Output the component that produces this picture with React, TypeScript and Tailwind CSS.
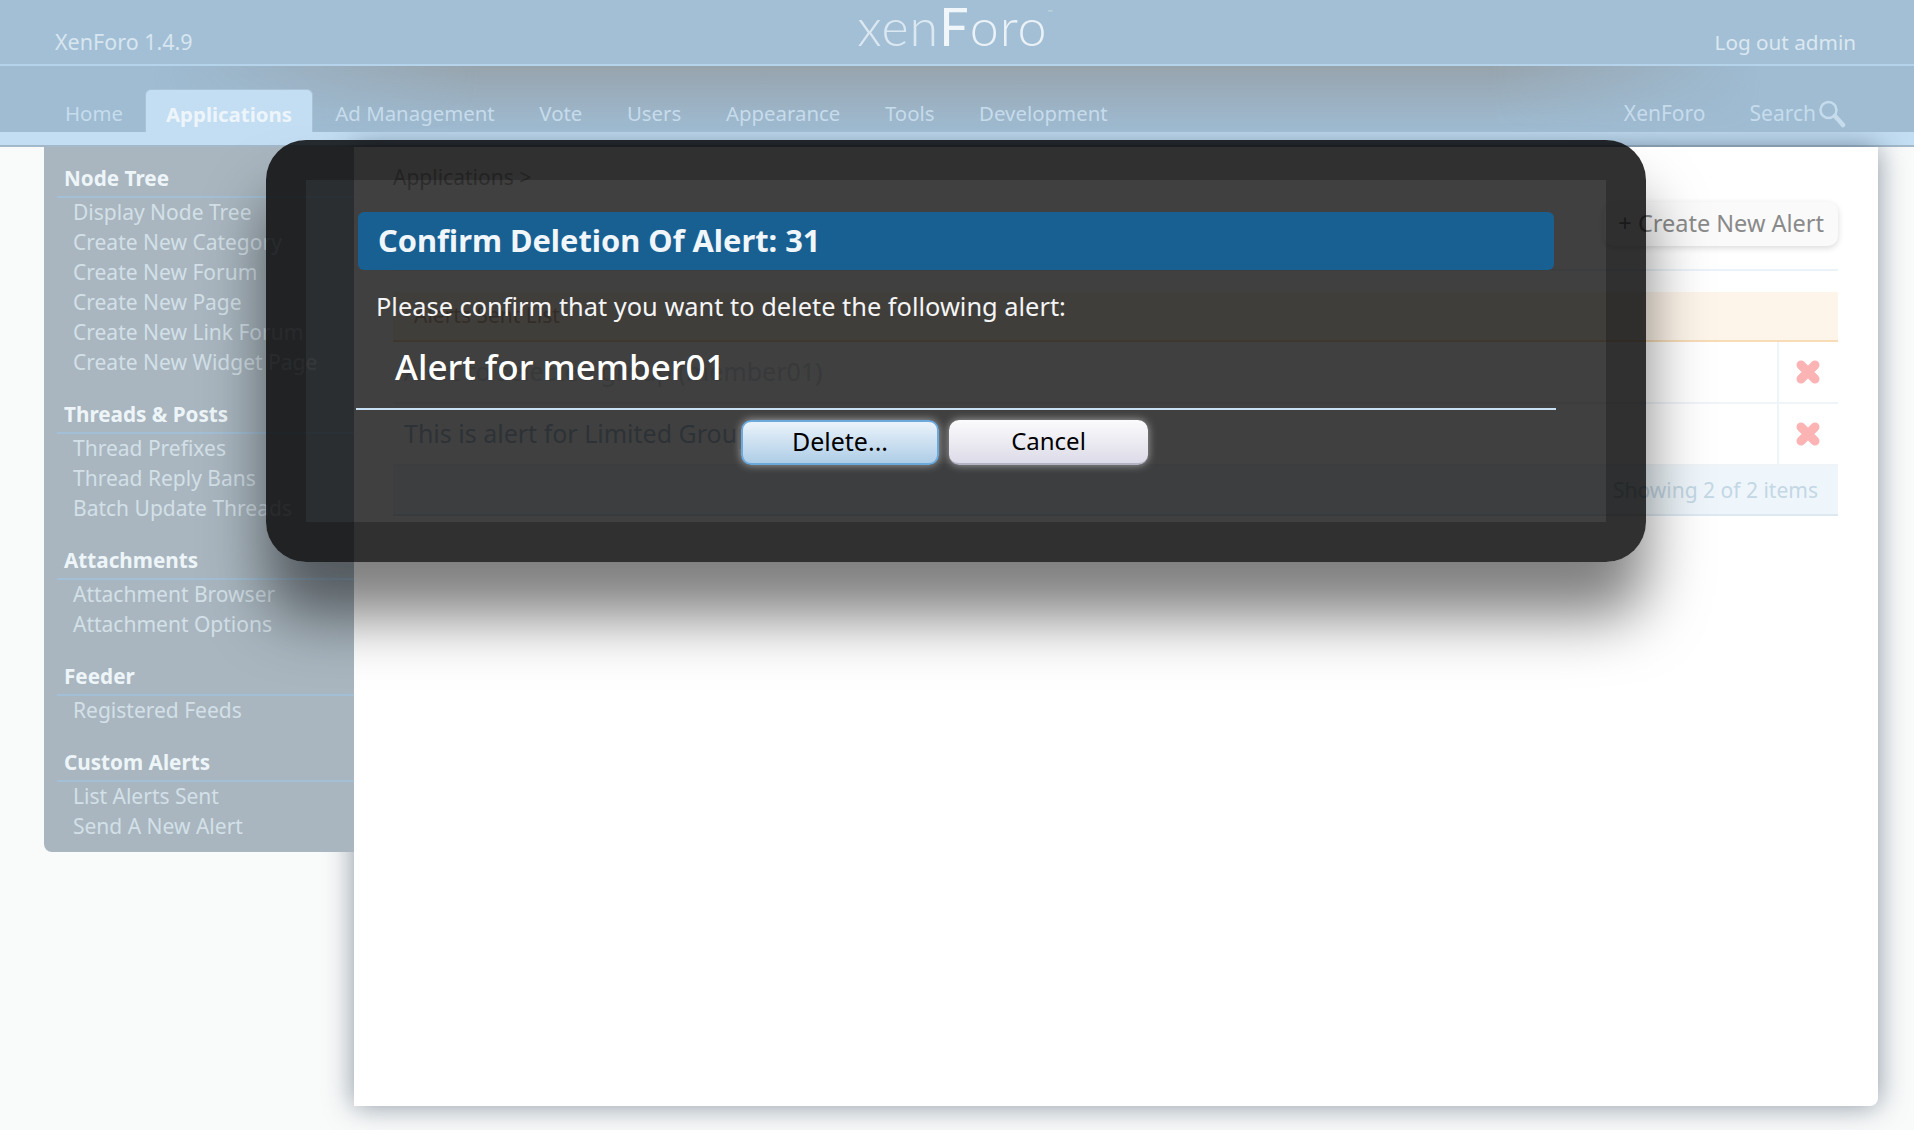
const font = { fontFamily: '"Noto Sans", "Liberation Sans", sans-serif' };

const navItems = ["Ad Management", "Vote", "Users", "Appearance", "Tools", "Development"];

const sections = [
  { title: "Node Tree", links: ["Display Node Tree", "Create New Category", "Create New Forum", "Create New Page", "Create New Link Forum", "Create New Widget Page"] },
  { title: "Threads & Posts", links: ["Thread Prefixes", "Thread Reply Bans", "Batch Update Threads"] },
  { title: "Attachments", links: ["Attachment Browser", "Attachment Options"] },
  { title: "Feeder", links: ["Registered Feeds"] },
  { title: "Custom Alerts", links: ["List Alerts Sent", "Send A New Alert"] },
];

function DeleteIcon() {
  return (
    <svg width="26" height="26" viewBox="0 0 26 26">
      <path d="M6 6 L20 20 M20 6 L6 20" stroke="#fcb3b3" strokeWidth="9" strokeLinecap="round" />
    </svg>
  );
}

function SearchIcon() {
  return (
    <svg width="28" height="28" viewBox="0 0 28 28" fill="none" stroke="#c6dcec" className="ml-[2px]">
      <circle cx="10.5" cy="10" r="8" strokeWidth="2.5" />
      <path d="M17 16 L25 25" strokeWidth="4.5" strokeLinecap="round" />
    </svg>
  );
}

function AlertRow({ text, faint }: { text: string; faint?: boolean }) {
  return (
    <div className="flex h-[62px] items-center border-b-2 border-[#eef4f8]">
      <div className={faint ? "flex-1 truncate pl-[11px] text-[25px] text-[#dde3e8]" : "flex-1 truncate pl-[11px] text-[25px] text-[#b2c6d6]"}>{text}</div>
      <div className="flex h-full w-[61px] items-center justify-center border-l-2 border-[#eef4f8] pr-[2px]">
        <DeleteIcon />
      </div>
    </div>
  );
}

export default function App() {
  return (
    <div className="relative h-[1130px] overflow-hidden bg-[#f9fafa]" style={font}>
      <header className="flex h-[66px] items-center border-b-2 border-[#b5d4ec] bg-[#a3bfd5] pl-[55px] pr-[58px]">
        <div className="flex-1 pt-[21px] text-[21.5px] text-[#d7e6f0]">XenForo 1.4.9</div>
        <div className="h-[52px] self-start text-[52px] font-light leading-[52px] tracking-[1px] text-[#dbe8f1]" style={{ fontFamily: "Lato, sans-serif" }}>
          xen<span className="font-normal text-[#f0f6fa]">F</span><span className="text-[#eaf2f7]">oro</span><span className="align-top text-[7px] leading-[24px]">™</span>
        </div>
        <div className="flex-1 pt-[21px] text-right text-[20.7px] text-[#dbe8f1]">Log out admin</div>
      </header>

      <nav className="relative flex h-[66px] items-end bg-[#9fbcd3] pl-[43px] pr-[68px] text-[20.4px] text-[#c6dcec]">
        <div className="absolute inset-0 bg-[linear-gradient(to_bottom,rgba(140,130,120,0.42),rgba(140,130,120,0))] [mask-image:linear-gradient(to_right,transparent_8%,black_25%,black_78%,transparent_92%)]" />
        <a className="relative flex h-[43px] w-[100px] items-center pl-[22px] pt-[6px]">Home</a>
        <a className="relative ml-[2px] flex h-[43px] w-[168px] items-center justify-center rounded-t-[6px] border-x border-t border-[#a9c2d6] bg-[#c3ddf2] pt-[6px] font-bold text-[#edf5fb]">Applications</a>
        <div className="relative flex">
          {navItems.map((item) => (
            <a key={item} className="flex h-[43px] items-center px-[22.3px] pt-[6px]">{item}</a>
          ))}
        </div>
        <div className="relative ml-auto flex items-center text-[21px]">
          <a className="flex h-[43px] items-center px-[22px] pt-[6px]">XenForo</a>
          <a className="flex h-[43px] items-center pl-[22px] pt-[6px]">Search<SearchIcon /></a>
        </div>
      </nav>
      <div className="h-[15px] border-b-2 border-[#a3b9ca] bg-[#c3ddf2]" />

      <div className="flex items-start pl-[44px] pr-[36px]">
        <aside className="relative z-10 h-[705px] w-[310px] rounded-bl-[8px] bg-[#a9b6bf] pl-[13px] pt-[14px]">
          {sections.map((s) => (
            <div key={s.title} className="mb-[19px]">
              <h3 className="flex h-[37px] items-center border-b-2 border-[#a3bfd6] pl-[7px] text-[20.7px] font-bold text-[#eef5f9]">{s.title}</h3>
              {s.links.map((l) => (
                <a key={l} className="flex h-[30px] items-center whitespace-nowrap pl-[16px] text-[21px] text-[#d3e0e8]">{l}</a>
              ))}
            </div>
          ))}
        </aside>

        <main className="h-[959px] flex-1 rounded-br-[8px] bg-white pl-[39px] pr-[40px] shadow-[0_0_28px_rgba(60,80,100,0.6)]">
          <div className="flex h-[55px] items-center pt-[7px] text-[21px] text-[#b4b4b4]">Applications &gt;</div>
          <div className="flex h-[69px] justify-end border-b-2 border-[#eaf4f8]">
            <button className="h-[44px] rounded-[10px] bg-[#fafafa] px-[14px] text-[23.5px] text-[#8a8a8a] shadow-[0_2px_6px_rgba(0,0,0,0.15)]">+ Create New Alert</button>
          </div>
          <div className="mt-[21px] flex h-[50px] items-center border-b-2 border-[#f8dcb8] bg-[#fef5ea] pl-[21px] text-[21px] text-[#c9b29a]">Alerts Sent List</div>
          <AlertRow text="Alert to selected group (member01)" faint />
          <AlertRow text="This is alert for Limited Group" />
          <div className="flex h-[50px] items-center justify-end border-b-2 border-[#dce9f1] bg-[#eef6fb] pr-[20px] pt-[2px] text-[21px] text-[#c3d7e4]">Showing 2 of 2 items</div>
        </main>
      </div>

      <div className="absolute left-[266px] top-[140px] z-20 h-[422px] w-[1380px] rounded-[40px] border-[40px] border-black/25 bg-black/75 shadow-[0_55px_60px_rgba(0,0,0,0.5)]">
        <h2 className="ml-[52px] mt-[32px] flex h-[58px] w-[1196px] items-center rounded-[6px] bg-[#196092] pb-[2px] pl-[20px] text-[30.8px] font-bold text-[#f0f6fa]">Confirm Deletion Of Alert: 31</h2>
        <p className="ml-[70px] mt-[19px] text-[25.4px] leading-[34px] text-[#f5f5f5]">Please confirm that you want to delete the following alert:</p>
        <p className="ml-[89px] mt-[19px] text-[35px] font-medium leading-[50px] text-white">Alert for member01</p>
        <div className="ml-[50px] mt-[16px] h-[2px] w-[1200px] bg-[#c8e0f4]" />
        <div className="ml-[435px] mt-[10px] flex gap-[10px]">
          <button className="h-[45px] w-[198px] rounded-[10px] border-2 border-[#6ba9dc] bg-[linear-gradient(to_bottom,#eaf3fb,#aecde6)] pb-[2px] text-[25px] text-black shadow-[0_0_8px_rgba(255,255,255,0.55)]">Delete...</button>
          <button className="h-[45px] w-[199px] rounded-[10px] border-b-2 border-[#b4b3c6] bg-[linear-gradient(to_bottom,#fbfbfc,#dcdbe8)] pb-[2px] text-[24px] text-black shadow-[0_0_8px_rgba(255,255,255,0.55)]">Cancel</button>
        </div>
      </div>
    </div>
  );
}
